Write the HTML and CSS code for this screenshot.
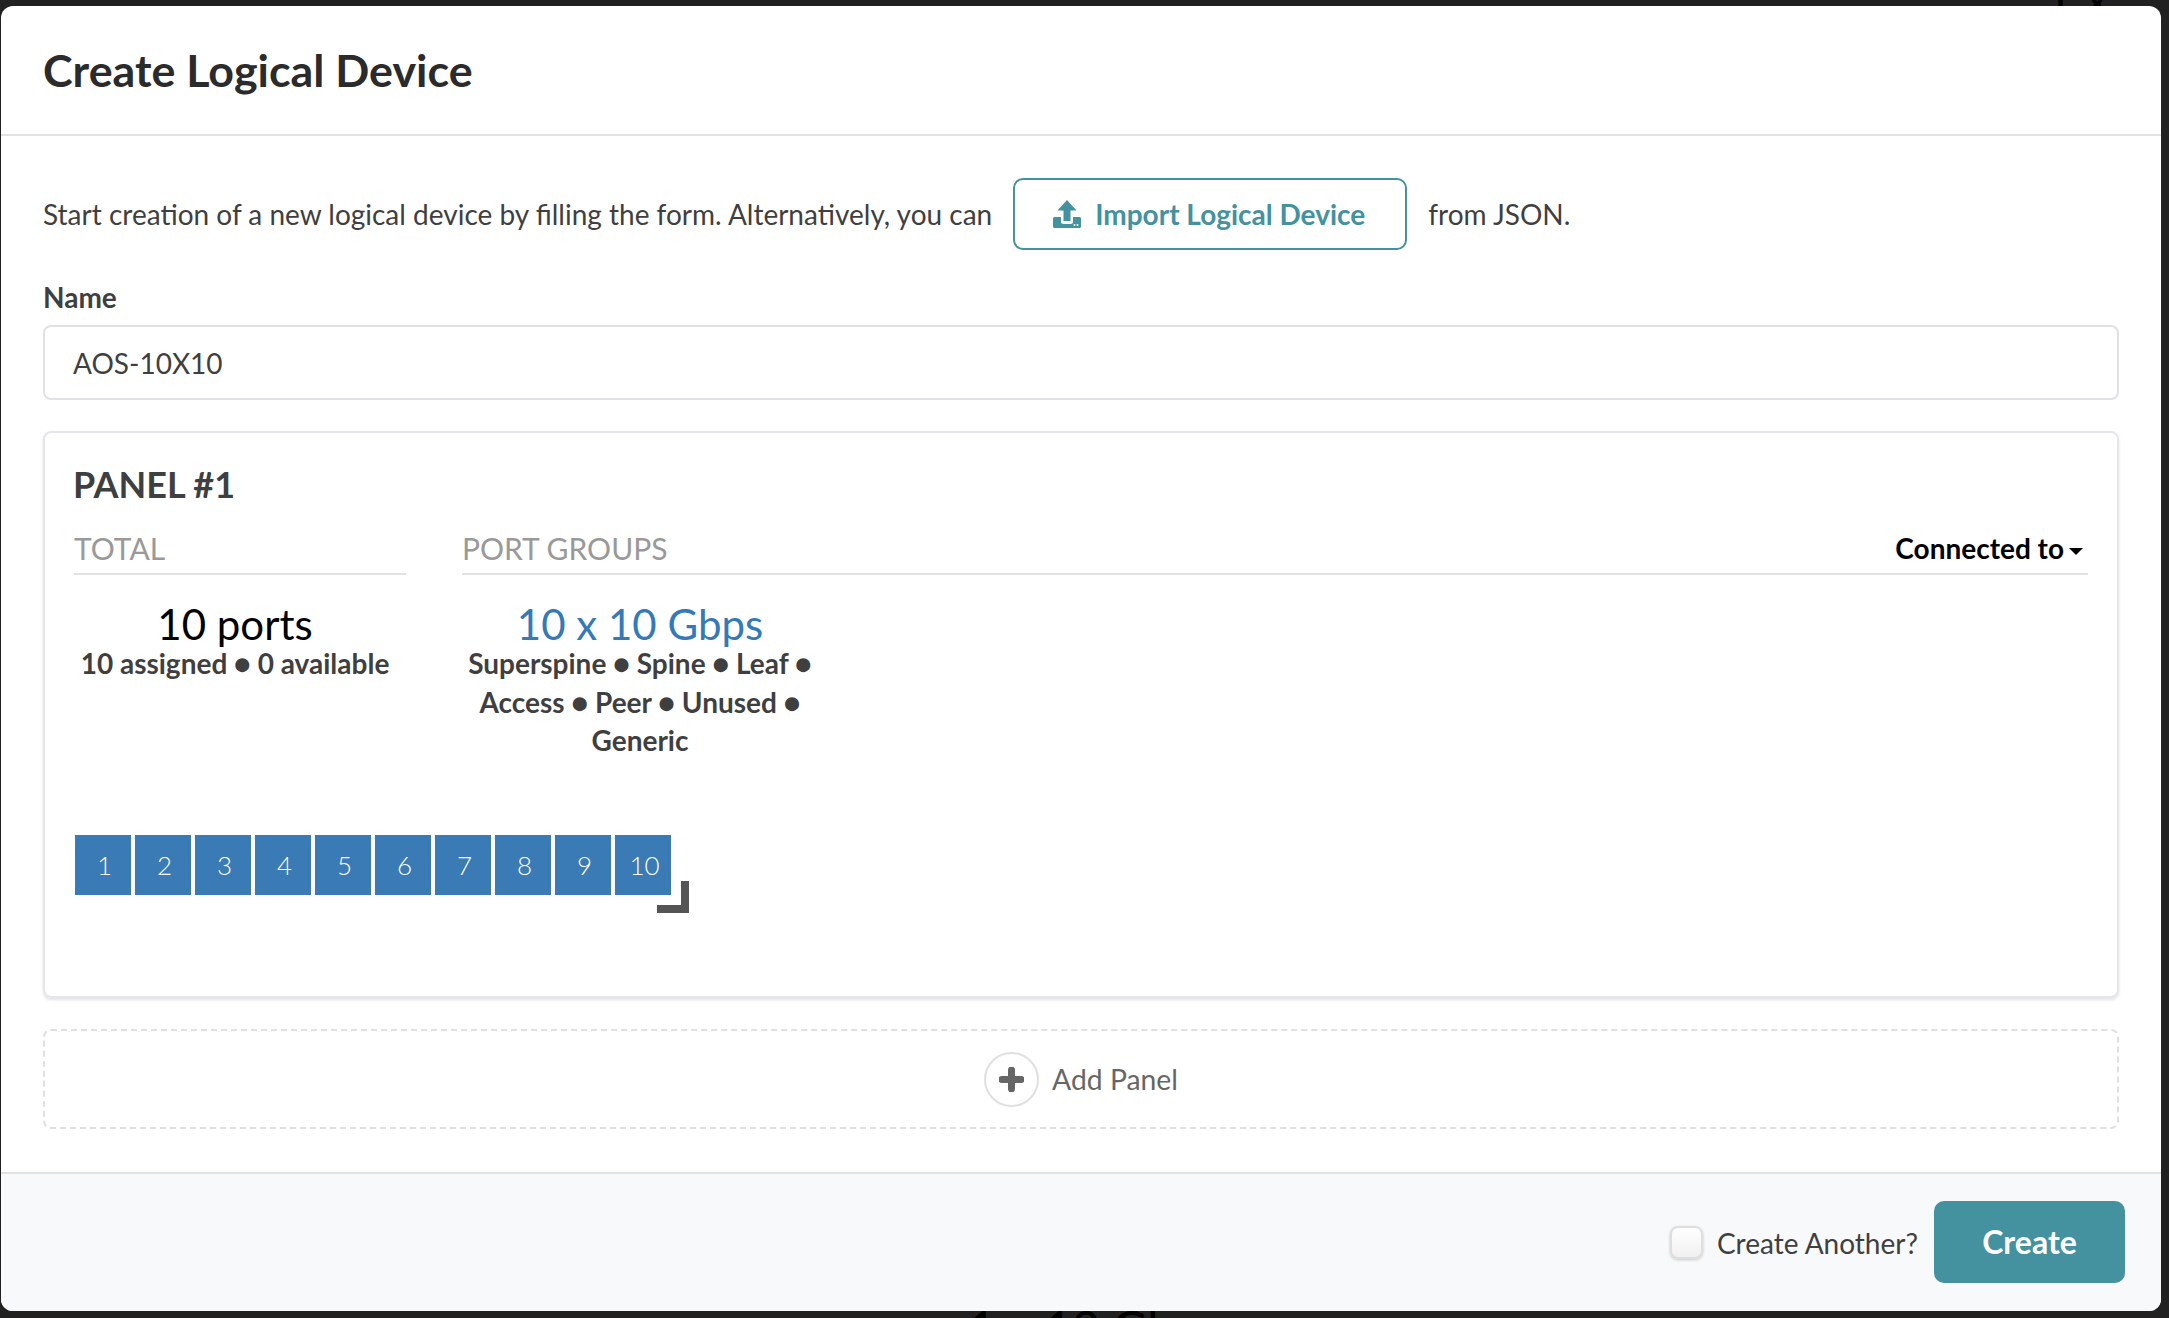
FILE: index.html
```html
<!DOCTYPE html>
<html lang="en">
<head>
  <meta charset="UTF-8">
  <title>Create Logical Device</title>
  <link rel="stylesheet" href="styles.css">
</head>
<body>

  <div class="backdrop">
    <span class="backdrop-top">1 x 10 Gbps</span>
    <span class="backdrop-bottom">1 x 10 Gbps</span>
  </div>

  <div class="modal">

    <div class="modal-header">
      <h1>Create Logical Device</h1>
    </div>

    <div class="modal-body">
      <div class="intro">
        <span>Start creation of a new logical device by filling the form. Alternatively, you can</span>
        <button class="import-btn">
          <svg class="import-icon" viewBox="0 0 28 28" aria-hidden="true">
            <path d="M14 0 L23.5 10.5 H17.5 V21 H10.5 V10.5 H4.500 Z"/>
            <path d="M1.500 17 H8 V21.500 Q8 24 10.500 24 H17.500 Q20 24 20 21.500 V17 H26.500 Q28 17 28 18.500 V26.500 Q28 28 26.500 28 H1.500 Q0 28 0 26.500 V18.500 Q0 17 1.500 17 Z"/>
            <circle cx="21.500" cy="25" r="1" fill="#fff"/>
            <circle cx="24.500" cy="25" r="1" fill="#fff"/>
          </svg>
          Import Logical Device
        </button>
        <span>from JSON.</span>
      </div>

      <label class="field-label">Name</label>
      <input class="name-input" type="text" value="AOS-10X10">

      <div class="panel">
        <div class="panel-title">PANEL #1</div>

        <div class="panel-columns">
          <div class="col-total">
            <div class="col-head">TOTAL</div>
            <div class="total-info">
              <div class="big-count">10 ports</div>
              <div class="sub-info">10 assigned ● 0 available</div>
            </div>
          </div>
          <div class="col-groups">
            <div class="col-head">
              <span>PORT GROUPS</span>
              <span class="connected">Connected to<i class="caret"></i></span>
            </div>
            <div class="group-info">
              <div class="big-count group-count">10 x 10 Gbps</div>
              <div class="sub-info">Superspine ● Spine ● Leaf ● Access ● Peer ● Unused ● Generic</div>
            </div>
          </div>
        </div>

        <div class="ports">
          <div class="port">1</div>
          <div class="port">2</div>
          <div class="port">3</div>
          <div class="port">4</div>
          <div class="port">5</div>
          <div class="port">6</div>
          <div class="port">7</div>
          <div class="port">8</div>
          <div class="port">9</div>
          <div class="port">10</div>
          <div class="resize-corner"></div>
        </div>
      </div>

      <div class="add-panel">
        <span class="add-circle">
          <svg class="add-icon" viewBox="0 0 25 25" aria-hidden="true">
            <path d="M12.500 3 V22 M3 12.500 H22"/>
          </svg>
        </span>
        Add Panel
      </div>
    </div>

    <div class="modal-footer">
      <span class="fake-check"></span>
      <span class="check-label">Create Another?</span>
      <button class="create-btn">Create</button>
    </div>

  </div>

</body>
</html>
```

FILE: styles.css
```css
body {
  background-color: #212121;
  font-family: "Lato", "Liberation Sans", sans-serif;
  color: #3f3f3f;
  margin: 0;
  padding: 0;
  height: 1318px;
  overflow: hidden;
}

.backdrop {
  position: absolute;
  top: 0;
  left: 0;
  width: 100%;
  height: 100%;
  overflow: hidden;
}

.backdrop span {
  position: absolute;
  color: #000;
  font-size: 48px;
}

.backdrop-top {
  top: -30px;
  left: 2045px;
}

.backdrop-bottom {
  top: 1299px;
  left: 968px;
}

.modal {
  position: relative;
  width: 2160px;
  height: 1305px;
  margin: 6px 0 0 1px;
  background-color: white;
  border-radius: 12px;
  overflow: hidden;
  display: flex;
  flex-direction: column;
}

.modal-header {
  height: 128px;
  border-bottom: 2px solid #e0e2e4;
  padding-left: 42px;
  display: flex;
  align-items: center;
}

.modal-header h1 {
  margin: 0;
  font-size: 44.800px;
  font-weight: 700;
  color: #2b2b2b;
}

.modal-body {
  flex: 1;
  padding: 42px 42px 0;
}

.intro {
  display: flex;
  align-items: center;
  gap: 21px;
  font-size: 28px;
}

.import-btn {
  height: 72px;
  width: 394px;
  display: flex;
  align-items: center;
  justify-content: center;
  gap: 14px;
  padding: 0 2px 0 0;
  background-color: white;
  border: 2px solid #44919f;
  border-radius: 10px;
  color: #44919f;
  font-family: inherit;
  font-size: 28px;
  font-weight: 700;
}

.import-icon {
  width: 28px;
  height: 28px;
  fill: #44919f;
}

.field-label {
  display: block;
  margin-top: 31px;
  margin-bottom: 12px;
  font-size: 28px;
  line-height: 32px;
  font-weight: 700;
}

.name-input {
  display: block;
  box-sizing: border-box;
  width: 100%;
  height: 75px;
  padding: 0 28px;
  border: 2px solid #dfe1e5;
  border-radius: 8px;
  font-family: inherit;
  font-size: 28px;
  color: #3f3f3f;
}

.panel {
  box-sizing: border-box;
  height: 567px;
  margin-top: 31px;
  padding: 30px 29px 0;
  border: 2px solid #e4e6ea;
  border-radius: 8px;
  box-shadow: 0 2px 3px rgba(60, 70, 100, 0.15);
}

.panel-title {
  margin-left: -1px;
  font-size: 36px;
  line-height: 42px;
  font-weight: 700;
}

.panel-columns {
  display: flex;
  gap: 56px;
  margin-top: 24px;
}

.col-total {
  width: 332px;
}

.col-groups {
  flex: 1;
}

.col-head {
  box-sizing: border-box;
  display: flex;
  justify-content: space-between;
  align-items: center;
  height: 46px;
  padding-bottom: 6px;
  border-bottom: 2px solid #e0e2e4;
  font-size: 30px;
  color: #999;
}

.connected {
  margin-right: 5px;
  color: #000;
  font-size: 28px;
  font-weight: 700;
}

.caret {
  display: inline-block;
  margin-left: 5px;
  vertical-align: middle;
  border-top: 7px solid #000;
  border-left: 7px solid transparent;
  border-right: 7px solid transparent;
}

.total-info {
  width: 322px;
  text-align: center;
  margin-top: 28px;
}

.group-info {
  width: 356px;
  text-align: center;
  margin-top: 28px;
}

.big-count {
  font-size: 42px;
  line-height: 42px;
  color: #000;
}

.group-count {
  color: #337ab7;
}

.sub-info {
  margin-top: -1px;
  font-size: 28px;
  line-height: 38.500px;
  font-weight: 700;
}

.ports {
  position: relative;
  display: flex;
  gap: 4px;
  width: 596px;
  margin-top: 75px;
  margin-left: 1px;
}

.port {
  box-sizing: border-box;
  width: 56px;
  height: 60px;
  padding-left: 3px;
  background-color: #3a7ab5;
  color: white;
  font-size: 26px;
  font-weight: 300;
  line-height: 60px;
  text-align: center;
}

.resize-corner {
  position: absolute;
  top: 46px;
  left: 582px;
  width: 24px;
  height: 24px;
  border-right: 8px solid #555;
  border-bottom: 8px solid #555;
}

.add-panel {
  display: flex;
  align-items: center;
  justify-content: center;
  gap: 13px;
  height: 100px;
  margin-top: 31px;
  box-sizing: border-box;
  border: 2px dashed #e0e0e0;
  border-radius: 8px;
  color: #666;
  font-size: 28.300px;
}

.add-circle {
  box-sizing: border-box;
  width: 55px;
  height: 55px;
  border: 2px solid #e0e0e0;
  border-radius: 50%;
  display: flex;
  align-items: center;
  justify-content: center;
}

.add-icon {
  width: 25px;
  height: 25px;
  stroke: #666;
  stroke-width: 7;
  stroke-linecap: round;
  fill: none;
}

.modal-footer {
  box-sizing: border-box;
  height: 139px;
  border-top: 2px solid #e0e2e4;
  background-color: #f8f9fb;
  display: flex;
  align-items: center;
  justify-content: flex-end;
  padding-right: 36px;
  padding-bottom: 2px;
  font-size: 28px;
}

.fake-check {
  box-sizing: border-box;
  width: 33px;
  height: 33px;
  margin-top: 2px;
  margin-right: 14px;
  border: 2px solid #dedede;
  border-radius: 8px;
  background: linear-gradient(#fff, #f0f0f0);
  box-shadow: 0 1px 3px rgba(0, 0, 0, 0.2);
}

.check-label {
  margin-top: 2px;
  margin-right: 16px;
}

.create-btn {
  width: 191px;
  height: 82px;
  background-color: #44919f;
  border: none;
  border-radius: 10px;
  color: white;
  font-family: inherit;
  font-size: 32px;
  font-weight: 700;
}
```
